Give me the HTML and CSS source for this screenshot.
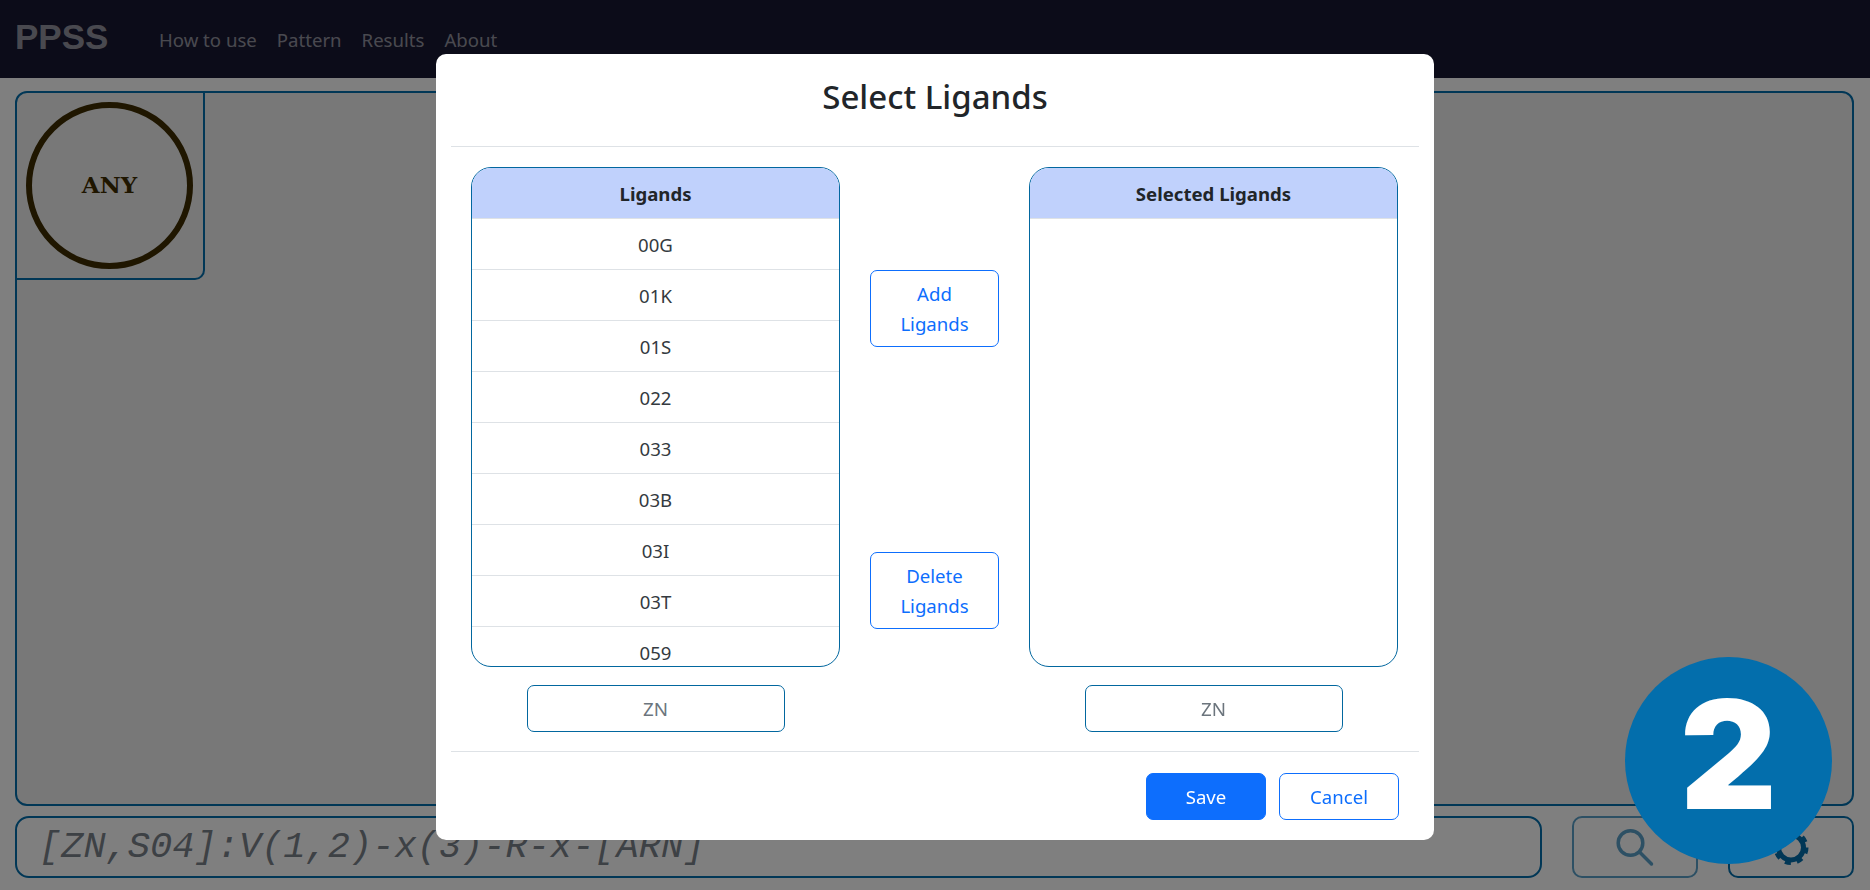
FILE: index.html
```html
<!DOCTYPE html>
<html lang="en">
<head>
<meta charset="utf-8">
<title>PPSS</title>
<link rel="stylesheet" href="styles.css">
</head>
<body>
<div class="page">
  <nav class="navbar">
    <span class="brand">PPSS</span>
    <ul class="nav-links">
      <li>How to use</li>
      <li>Pattern</li>
      <li>Results</li>
      <li>About</li>
    </ul>
  </nav>
  <main class="workspace">
    <section class="canvas">
      <div class="node"><div class="node-circle">ANY</div></div>
    </section>
    <div class="query-row">
      <div class="query-input">[ZN,S04]:V(1,2)-x(3)-R-x-[ARN]</div>
      <button class="icon-btn search-btn" type="button" aria-label="Search">
        <svg width="44" height="44" viewBox="0 0 44 44" fill="none" stroke="currentColor" stroke-width="3.5" stroke-linecap="round"><circle cx="17.5" cy="18" r="12.3"/><path d="M26.5 27 L38.5 39"/></svg>
      </button>
      <button class="icon-btn gear-btn" type="button" aria-label="Settings">
        <svg width="44" height="44" viewBox="0 0 44 44" fill="none" stroke="currentColor"><circle cx="22" cy="22.5" r="12.5" stroke-width="5"/><circle cx="22" cy="22.5" r="15.5" stroke-width="4" stroke-dasharray="6 6.17"/></svg>
      </button>
    </div>
  </main>
</div>

<div class="backdrop"></div>

<div class="modal">
  <header class="modal-header"><h1>Select Ligands</h1></header>
  <div class="modal-body">
    <div class="column">
      <div class="list-panel">
        <div class="list-head">Ligands</div>
        <div class="list-item">00G</div>
        <div class="list-item">01K</div>
        <div class="list-item">01S</div>
        <div class="list-item">022</div>
        <div class="list-item">033</div>
        <div class="list-item">03B</div>
        <div class="list-item">03I</div>
        <div class="list-item">03T</div>
        <div class="list-item">059</div>
      </div>
      <div class="filter">ZN</div>
    </div>
    <div class="actions">
      <button class="btn btn-outline btn-tall" type="button">Add Ligands</button>
      <button class="btn btn-outline btn-tall" type="button">Delete Ligands</button>
    </div>
    <div class="column">
      <div class="list-panel">
        <div class="list-head">Selected Ligands</div>
      </div>
      <div class="filter">ZN</div>
    </div>
  </div>
  <footer class="modal-footer">
    <button class="btn btn-primary" type="button">Save</button>
    <button class="btn btn-outline" type="button">Cancel</button>
  </footer>
</div>

<div class="step-badge">2</div>
</body>
</html>
```
FILE: styles.css
```css
* { box-sizing: border-box; }
html, body { margin: 0; height: 100%; }
body {
  background: #fff;
  font-family: "Noto Sans", "Open Sans", sans-serif;
  color: #212529;
  overflow: hidden;
}
.page { height: 890px; display: flex; flex-direction: column; }
.navbar {
  height: 78px;
  background: #181832;
  display: flex;
  align-items: center;
  padding-left: 15px;
}
.brand {
  font-family: "Liberation Sans", Arial, sans-serif;
  font-weight: 700;
  font-size: 35px;
  color: rgba(255,255,255,.55);
  width: 144px;
  position: relative;
  top: -2px;
}
.nav-links {
  list-style: none;
  display: flex;
  gap: 20px;
  margin: 0;
  padding: 0;
  font-size: 18.6px;
  color: rgba(255,255,255,.55);
}
.workspace {
  flex: 1;
  display: flex;
  flex-direction: column;
  padding: 13px 16px 12px 15px;
  gap: 10px;
  min-height: 0;
}
.canvas {
  flex: 1;
  border: 2px solid #036eac;
  border-radius: 12px;
  background: #f0f0f0;
}
.node {
  width: 188px;
  height: 187px;
  border-right: 2px solid #036eac;
  border-bottom: 2px solid #036eac;
  border-radius: 0 0 10px 0;
  padding: 9px 0 0 9px;
}
.node-circle {
  width: 167px;
  height: 167px;
  border: 6px solid #3e2c00;
  border-radius: 50%;
  display: flex;
  align-items: center;
  justify-content: center;
  padding-bottom: 2px;
  font-family: "DejaVu Serif", "Liberation Serif", serif;
  font-weight: 700;
  font-size: 23px;
  color: #3e2c00;
}
.query-row { display: flex; height: 62px; gap: 30px; }
.query-input {
  flex: 1;
  border: 2px solid #036eac;
  border-radius: 14px;
  padding-left: 22px;
  display: flex;
  align-items: center;
  font-family: "Liberation Mono", "Courier New", monospace;
  font-style: italic;
  font-size: 37px;
  letter-spacing: .01px;
  color: #7a828a;
}
.icon-btn {
  width: 126px;
  background: transparent;
  border: 2px solid #036eac;
  border-radius: 10px;
  padding: 0;
  display: flex;
  align-items: center;
  justify-content: center;
  color: #036eac;
}
.search-btn { opacity: .65; }
.backdrop {
  position: fixed;
  inset: 0;
  background: rgba(0,0,0,.5);
}
.modal {
  position: fixed;
  left: 436px;
  top: 54px;
  width: 998px;
  height: 786px;
  background: #fff;
  border-radius: 10px;
  padding: 0 15px;
  display: flex;
  flex-direction: column;
}
.modal-header {
  height: 93px;
  border-bottom: 1px solid #dee2e6;
  display: flex;
  align-items: center;
  justify-content: center;
}
.modal-header h1 {
  margin: 0;
  font-size: 33px;
  font-weight: 500;
  color: #212529;
  position: relative;
  top: -4px;
}
.modal-body {
  flex: 1;
  display: flex;
  justify-content: space-between;
  padding: 20px 21px 19px 20px;
  border-bottom: 1px solid #dee2e6;
}
.column { width: 369px; display: flex; flex-direction: column; align-items: center; gap: 18px; }
.list-panel {
  width: 100%;
  height: 500px;
  border: 1px solid #02679f;
  border-radius: 20px;
  overflow: hidden;
  font-size: 18.6px;
}
.list-head {
  height: 51px;
  background: #c0d1fc;
  display: flex;
  align-items: center;
  justify-content: center;
  font-weight: 700;
  border-bottom: 1px solid #dee2e6;
}
.list-item {
  height: 51px;
  flex: none;
  display: flex;
  align-items: center;
  justify-content: center;
  border-bottom: 1px solid #dee2e6;
  color: #343a40;
}
.filter {
  width: 258px;
  height: 47px;
  border: 1px solid #02679f;
  border-radius: 7px;
  display: flex;
  align-items: center;
  justify-content: center;
  font-size: 18.8px;
  color: #6c757d;
}
.actions {
  width: 129px;
  height: 500px;
  display: flex;
  flex-direction: column;
  justify-content: space-between;
  padding: 103px 0 38px;
}
.btn {
  font-family: inherit;
  font-size: 18.6px;
  border-radius: 7px;
  cursor: pointer;
}
.btn-outline { background: #fff; border: 1px solid #0d6efd; color: #0d6efd; }
.btn-primary { background: #0d6efd; border: 1px solid #0d6efd; color: #fff; }
.btn-tall { height: 77px; line-height: 30px; padding: 0 12px; }
.modal-footer {
  height: 88px;
  display: flex;
  justify-content: flex-end;
  gap: 13px;
  padding: 21px 20px 20px 0;
}
.modal-footer .btn { width: 120px; height: 47px; }
.step-badge {
  position: fixed;
  left: 1625px;
  top: 657px;
  width: 207px;
  height: 207px;
  border-radius: 50%;
  background: #036eac;
  color: #fff;
  display: flex;
  align-items: center;
  justify-content: center;
  padding-bottom: 12px;
  font-family: Inter, "Liberation Sans", sans-serif;
  font-weight: 900;
  font-size: 150px;
  line-height: 1;
}
```
